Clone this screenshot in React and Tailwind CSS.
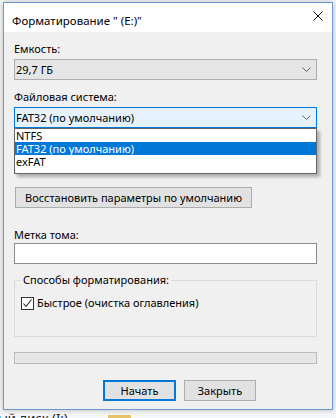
import { useState } from 'react';

const fsOptions = ['NTFS', 'FAT32 (по умолчанию)', 'exFAT'];

function Chevron() {
  return (
    <svg width="9" height="5" viewBox="0 0 9 5" className="shrink-0">
      <path d="M0.5 0.5L4.5 4.5L8.5 0.5" fill="none" stroke="#606060" strokeWidth="1" />
    </svg>
  );
}

function Combo({ value, active }) {
  return (
    <div className={`flex h-[21px] items-center justify-between border pl-[1px] pr-[5px] ${active ? 'border-[#0078d7] bg-[#e5f1fb]' : 'border-[#adadad] bg-[#e5e5e5]'}`}>
      <span className="leading-[16px]">{value}</span>
      <Chevron />
    </div>
  );
}

function Button({ children, primary, className = '' }) {
  return (
    <button className={`flex h-[21px] items-center justify-center whitespace-nowrap bg-[#e1e1e1] leading-[16px] ${primary ? 'border-2 border-[#0078d7]' : 'border border-[#adadad]'} ${className}`}>
      {children}
    </button>
  );
}

export default function App() {
  const [fs, setFs] = useState(1);
  const [quick, setQuick] = useState(true);
  return (
    <div className="flex h-[418px] w-[336px] flex-col overflow-hidden bg-[#f6f7f9] text-[11px] text-black [font-family:'Noto_Sans',sans-serif]">
      <div className="ml-[3px] mt-[2px] flex h-[408px] w-[330px] shrink-0 flex-col border border-[#6b98cf] shadow-[0_0_6px_rgba(0,0,0,0.25)]">
        <div className="flex h-[29px] shrink-0 items-start justify-between bg-white pl-[8px] pr-[9px]">
          <span className="pt-[10px] text-[11.5px] leading-[16px]">Форматирование " (E:)"</span>
          <svg width="10" height="10" viewBox="0 0 10 10" className="mt-[8px]">
            <path d="M0.5 0.5L9.5 9.5M9.5 0.5L0.5 9.5" stroke="#111" strokeWidth="1" />
          </svg>
        </div>

        <div className="flex flex-1 flex-col bg-[#f0f0f0] pl-[10px] pr-[15px] pt-[9px]">
          <div className="leading-[16px]">Емкость:</div>
          <div className="mt-[2px]"><Combo value="29,7 ГБ" /></div>

          <div className="mt-[9px] leading-[16px]">Файловая система:</div>
          <div className="relative z-10 mt-[2px]">
            <Combo value={fsOptions[fs]} active />
            <div className="absolute left-0 top-[21px] h-[46px] w-full border border-[#646464] bg-white shadow-[3px_3px_3px_rgba(0,0,0,0.28)]">
              {fsOptions.map((o, i) => (
                <div key={o} onClick={() => setFs(i)} className={`h-[13px] px-[1px] leading-[13px] ${i === fs ? 'bg-[#0078d7] text-white' : ''}`}>{o}</div>
              ))}
            </div>
          </div>

          <div className="h-[59px] shrink-0" />

          <Button className="ml-px w-[237px]">Восстановить параметры по умолчанию</Button>

          <div className="mt-[19px] leading-[16px]">Метка тома:</div>
          <div className="h-[21px] border border-[#8c8c8c] bg-white" />

          <fieldset className="mt-[8px] border border-[#dcdcdc] px-[6px] pb-[25px]">
            <legend className="px-[2px] leading-[16px]">Способы форматирования:</legend>
            <label className="mt-[7px] flex h-[16px] items-center gap-[3px]" onClick={() => setQuick(!quick)}>
              <span className="flex h-[13px] w-[13px] items-center justify-center border border-[#333] bg-white">
                {quick && (
                  <svg width="11" height="11" viewBox="0 0 11 11">
                    <path d="M1.5 5.5L4 8.5L9.5 1.5" fill="none" stroke="#222" strokeWidth="1.1" />
                  </svg>
                )}
              </span>
              <span className="leading-[16px]">Быстрое (очистка оглавления)</span>
            </label>
          </fieldset>

          <div className="mt-[15px] h-[12px] border border-[#bcbcbc] bg-[#e6e6e6]" />

          <div className="mt-[16px] flex gap-[8px] pl-[89px]">
            <Button primary className="w-[73px]">Начать</Button>
            <Button className="w-[72px]">Закрыть</Button>
          </div>
        </div>
      </div>

      <div className="flex h-[8px] items-start overflow-hidden">
        <span className="-ml-[2px] mt-[1px] text-[13px] leading-[14px] text-[#222]">ый диск (I:)</span>
        <span className="ml-[40px] mt-[5px] h-[4px] w-[23px] bg-[#e6c36b]" />
      </div>
    </div>
  );
}
